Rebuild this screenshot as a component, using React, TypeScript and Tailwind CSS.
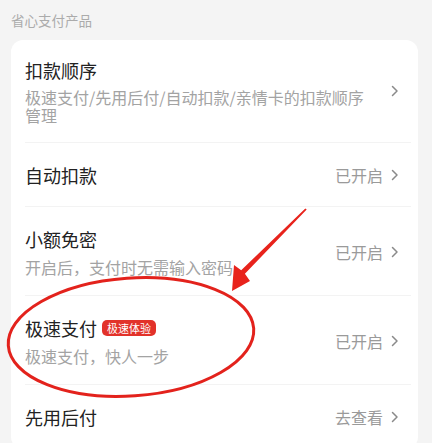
import React from 'react';

function Chevron() {
  return (
    <svg width="8" height="12" viewBox="0 0 8 12" className="shrink-0">
      <path d="M1.5 1.5 L6 6 L1.5 10.5" fill="none" stroke="#8a8a8a" strokeWidth="1.5" strokeLinecap="round" strokeLinejoin="round" />
    </svg>
  );
}

function Row({
  title,
  sub,
  status,
  badge,
  last,
  className = 'py-5',
}: {
  title: string;
  sub?: string;
  status?: string;
  badge?: string;
  last?: boolean;
  className?: string;
}) {
  return (
    <div className={`relative flex items-center pl-[14px] pr-[19px] ${className}`}>
      <div className="flex-1 min-w-0">
        <div className="flex items-center gap-[5px]">
          <span className="text-[18px] leading-[24px] text-[#222]">{title}</span>
          {badge && (
            <span className="rounded-[5px] bg-[#e2322a] px-[5px] text-[11px] leading-[16px] text-white">{badge}</span>
          )}
        </div>
        {sub && <p className="mt-[7px] pr-2 text-[16px] leading-[18px] text-[#a3a3a3]">{sub}</p>}
      </div>
      <div className="flex items-center gap-[8px] pl-2">
        {status && <span className="text-[16px] leading-[20px] text-[#9a9a9a]">{status}</span>}
        <Chevron />
      </div>
      {!last && <div className="absolute bottom-0 left-[14px] right-[7px] h-px bg-[#f3f3f3]" />}
    </div>
  );
}

export default function App() {
  return (
    <div
      className="relative h-[443px] w-[432px] overflow-hidden bg-[#f4f4f4]"
      style={{ fontFamily: '"Noto Sans CJK SC", "Noto Sans", sans-serif' }}
    >
      <p className="pl-[11px] pt-[12px] text-[13.5px] leading-[16px] text-[#ababab]">省心支付产品</p>

      <div className="ml-[11px] mr-[14px] mt-[12px] rounded-[12px] bg-white">
        <Row
          title="扣款顺序"
          sub="极速支付/先用后付/自动扣款/亲情卡的扣款顺序管理"
          className="pt-[18px] pb-[19px] [&_p]:mt-[6px]"
        />
        <Row title="自动扣款" status="已开启" />
        <Row title="小额免密" sub="开启后，支付时无需输入密码" status="已开启" />
        <Row title="极速支付" badge="极速体验" sub="极速支付，快人一步" status="已开启" />
        <Row title="先用后付" status="去查看" last />
      </div>

      <svg className="pointer-events-none absolute inset-0" width="432" height="443" viewBox="0 0 432 443">
        <ellipse cx="131" cy="337" rx="123" ry="59" transform="rotate(-4 131 337)" fill="none" stroke="#e3221c" strokeWidth="3" />
        <polygon
          points="305.3,208.4 241.2,270.3 234,265 232,291 250,281 244.9,273.7 306.7,209.6"
          fill="#e8231c"
        />
      </svg>
    </div>
  );
}
